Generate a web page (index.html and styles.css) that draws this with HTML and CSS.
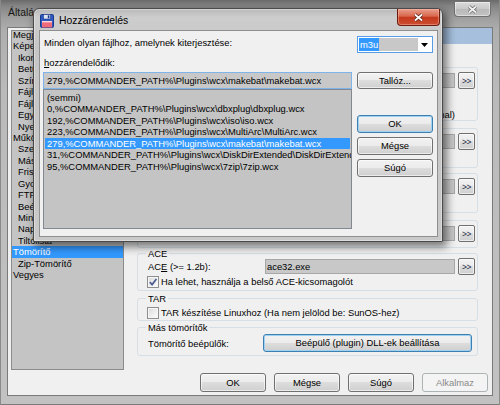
FILE: index.html
```html
<!DOCTYPE html>
<html lang="hu">
<head>
<meta charset="utf-8">
<title>Hozzárendelés</title>
<link rel="stylesheet" href="styles.css">
</head>
<body>
<div class="desk">
  <div class="win">
    <div class="win-title">
      <span class="win-caption">Általános beállítások</span>
      <span class="cap-close cap-close--inactive">
        <svg width="11" height="9" viewBox="0 0 11 9"><path d="M2 1.5l7 6M9 1.5l-7 6" stroke="#6a6a6a" stroke-width="3.4"/><path d="M2 1.5l7 6M9 1.5l-7 6" stroke="#f2f2f2" stroke-width="1.7"/></svg>
      </span>
    </div>
    <div class="win-client">
      <div class="tree">
        <ul class="tree-items">
          <li class="ti">Megjelenés</li>
          <li class="ti">Képernyő</li>
          <li class="ti ti--sub">Ikonok</li>
          <li class="ti ti--sub">Betűkészlet</li>
          <li class="ti ti--sub">Színek</li>
          <li class="ti ti--sub">Fájlmegjelenítés</li>
          <li class="ti ti--sub">Fájllista-fülek</li>
          <li class="ti ti--sub">Egyéni oszlopok</li>
          <li class="ti ti--sub">Nyelv</li>
          <li class="ti">Működés</li>
          <li class="ti ti--sub">Szerkesztés/Nézőke</li>
          <li class="ti ti--sub">Másolás/Törlés</li>
          <li class="ti ti--sub">Frissítés</li>
          <li class="ti ti--sub">Gyorskeresés</li>
          <li class="ti ti--sub">FTP</li>
          <li class="ti ti--sub">Beépülők</li>
          <li class="ti ti--sub">Miniatűrök</li>
          <li class="ti ti--sub">Naplófájl</li>
          <li class="ti ti--sub">Tiltólista</li>
          <li class="ti ti--sel">Tömörítő</li>
          <li class="ti ti--sub">Zip-Tömörítő</li>
          <li class="ti">Vegyes</li>
        </ul>
      </div>

      <div class="panel">
        <div class="panel-band"></div>

        <div class="grp grp--arj">
          <div class="grp-label grp-label--hidden"></div>
          <div class="prow"><span class="plabel"></span><span class="field"></span><span class="mini">&gt;&gt;</span></div>
          <div class="cline cline--first"><span class="chk"></span></div>
          <div class="cline cline--second"><span class="chk"></span><span>Kicsomagoláshoz a belső kicsomagoló használata (ARJ v2.xx, normal)</span></div>
        </div>

        <div class="grp grp--lha">
          <div class="grp-label grp-label--hidden"></div>
          <div class="prow"><span class="plabel"></span><span class="field"></span><span class="mini">&gt;&gt;</span></div>
        </div>

        <div class="grp grp--rar">
          <div class="grp-label grp-label--hidden"></div>
          <div class="prow"><span class="plabel"></span><span class="field"></span><span class="mini">&gt;&gt;</span></div>
        </div>

        <div class="grp grp--uc2">
          <div class="grp-label grp-label--hidden"></div>
          <div class="prow"><span class="plabel"></span><span class="field"></span><span class="mini">&gt;&gt;</span></div>
        </div>

        <div class="grp grp--ace">
          <div class="grp-label">ACE</div>
          <div class="prow"><span class="plabel">AC<u>E</u> (&gt;= 1.2b):</span><span class="field">ace32.exe</span><span class="mini">&gt;&gt;</span></div>
          <div class="cline cline--ace"><span class="chk chk--on"><svg width="10" height="10" viewBox="0 0 10 10"><path d="M1.8 5.2l2.3 2.4 4.3-5.6" fill="none" stroke="#4a5d91" stroke-width="1.7"/></svg></span><span>Ha lehet, használja a belső ACE-kicsomagolót</span></div>
        </div>

        <div class="grp grp--tar">
          <div class="grp-label">TAR</div>
          <div class="cline cline--tar"><span class="chk"></span><span>TAR készítése Linuxhoz (Ha nem jelölöd be: SunOS-hez)</span></div>
        </div>

        <div class="grp grp--other">
          <div class="grp-label">Más tömörítők</div>
          <div class="prow prow--btn"><span class="plabel">Tömörítő beépülők:</span><button type="button" class="btn btn--default">Beépülő (plugin) DLL-ek beállítása</button></div>
        </div>
      </div>

      <div class="win-buttons">
        <button type="button" class="btn">OK</button>
        <button type="button" class="btn">Mégse</button>
        <button type="button" class="btn">Súgó</button>
        <button type="button" class="btn btn--disabled">Alkalmaz</button>
      </div>
    </div>
  </div>

  <div class="dlg">
    <div class="dlg-title">
      <svg class="dlg-icon" width="14" height="14" viewBox="0 0 14 14">
        <rect x="0.5" y="0.5" width="13" height="13" rx="1.2" fill="#2f59c0" stroke="#1b3a8c"/>
        <rect x="3.5" y="0.5" width="7" height="4.5" fill="#dfe6f3" stroke="#1b3a8c" stroke-width="0.6"/>
        <rect x="7.8" y="1.3" width="1.6" height="3" fill="#1b3a8c"/>
        <rect x="2" y="7" width="10" height="6.5" fill="#ef6b7b"/>
        <rect x="2" y="7" width="10" height="1.4" fill="#fbd3d8"/>
      </svg>
      <span class="dlg-caption">Hozzárendelés</span>
      <span class="dlg-close">
        <svg width="11" height="9" viewBox="0 0 11 9"><path d="M2 1.5l7 6M9 1.5l-7 6" stroke="#5a2318" stroke-width="3.4"/><path d="M2 1.5l7 6M9 1.5l-7 6" stroke="#ffffff" stroke-width="1.7"/></svg>
      </span>
    </div>
    <div class="dlg-client">
      <div class="drow1">
        <span class="dlabel">Minden olyan fájlhoz, amelynek kiterjesztése:</span>
        <div class="combo">
          <div class="combo-edit"><span class="combo-sel">m3u</span></div>
          <div class="combo-arrow"><svg width="7" height="4" viewBox="0 0 7 4"><path d="M0 0h7L3.5 4z" fill="#000"/></svg></div>
        </div>
      </div>
      <div class="dlabel dlabel--second"><u>h</u>ozzárendelődik:</div>
      <div class="dgrid">
        <div class="dleft">
          <div class="dedit">279,%COMMANDER_PATH%\Plugins\wcx\makebat\makebat.wcx</div>
          <ul class="dlist">
            <li class="dli">(semmi)</li>
            <li class="dli">0,%COMMANDER_PATH%\Plugins\wcx\dbxplug\dbxplug.wcx</li>
            <li class="dli">192,%COMMANDER_PATH%\Plugins\wcx\iso\iso.wcx</li>
            <li class="dli">223,%COMMANDER_PATH%\Plugins\wcx\MultiArc\MultiArc.wcx</li>
            <li class="dli dli--sel">279,%COMMANDER_PATH%\Plugins\wcx\makebat\makebat.wcx</li>
            <li class="dli">31,%COMMANDER_PATH%\Plugins\wcx\DiskDirExtended\DiskDirExtended.wcx</li>
            <li class="dli">95,%COMMANDER_PATH%\Plugins\wcx\7zip\7zip.wcx</li>
          </ul>
        </div>
        <div class="dright">
          <button type="button" class="btn dbtn">Tallóz...</button>
          <button type="button" class="btn btn--default dbtn dbtn--ok">OK</button>
          <button type="button" class="btn dbtn dbtn--next">Mégse</button>
          <button type="button" class="btn dbtn dbtn--next">Súgó</button>
        </div>
      </div>
    </div>
  </div>
</div>
</body>
</html>
```
FILE: styles.css
```css
* { box-sizing: border-box; }
html, body { margin: 0; padding: 0; }
body {
  width: 500px;
  height: 405px;
  overflow: hidden;
  font-family: "Liberation Sans", Arial, sans-serif;
  font-size: 9.4px;
  color: #000;
  background: #a0a0a0;
}
u { text-decoration: underline; text-underline-offset: 1px; }

.desk { position: relative; width: 500px; height: 405px; }

/* ---------- main (background) window ---------- */
.win {
  width: 500px;
  height: 405px;
  display: flex;
  flex-direction: column;
  padding: 0 7px 9px 7px;
  background: linear-gradient(to bottom, #6a6a6a 0, #858585 6px, #9f9f9f 18px, #aeaeae 30px, #bababa 90px, #c2c2c2 100%);
  box-shadow: inset 1px 0 0 #8a8a8a, inset -1px 0 0 #8a8a8a, inset 0 -1px 0 #7a7a7a;
}
.win-title { flex: none; height: 27px; display: flex; align-items: flex-start; }
.win-caption {
  margin: 7px 0 0 1px;
  font-size: 10.4px;
  line-height: 12px;
  color: #151515;
  white-space: nowrap;
}
.cap-close {
  margin: 2px 2px 0 auto;
  width: 37px;
  height: 15px;
  display: flex;
  align-items: center;
  justify-content: center;
  border: 1px solid #707070;
  border-top: none;
  border-radius: 0 0 4px 4px;
  background: linear-gradient(to bottom, #dadada 0%, #c8c8c8 50%, #b9b9b9 51%, #c3c3c3 100%);
  box-shadow: inset 0 0 0 1px rgba(255, 255, 255, 0.45);
}

.win-client {
  flex: 1;
  min-height: 0;
  border: 1px solid #7a7a7a;
  background: #f0f0f0;
  display: grid;
  grid-template-columns: 116px 1fr;
  grid-template-rows: 342px 1fr;
}

/* tree */
.tree {
  margin: 2px 0 0 3px;
  width: 113px;
  height: 340px;
  border: 1px solid #8b8b8b;
  background: #c4c4c4;
  overflow: hidden;
}
.tree-items { list-style: none; margin: -2px 0 0 0; padding: 0; }
.ti { line-height: 11.43px; padding-left: 1px; white-space: nowrap; }
.ti--sub { padding-left: 6px; }
.ti--sel { background: #3399ff; color: #fff; }

/* right panel */
.panel { display: flex; flex-direction: column; min-width: 0; }
.panel-band { flex: none; height: 16px; margin-left: 4px; background: #a5bfdc; }

.grp {
  flex: none;
  margin: 0 14px 0 13px;
  border: 1px solid #d5dfe5;
  border-radius: 3px;
  padding: 0 5px 0 9px;
}
.grp--arj { margin-top: 23px; height: 54px; }
.grp--lha { margin-top: 7px; height: 40px; }
.grp--rar { margin-top: 5px; height: 40px; }
.grp--uc2 { margin-top: 7px; height: 28px; }
.grp--ace { margin-top: 5px; height: 38px; }
.grp--tar { margin-top: 7px; height: 23px; }
.grp--other { margin-top: 6px; height: 29px; }

.grp-label {
  margin: -6px 0 0 -1px;
  padding: 0 2px;
  width: max-content;
  height: 11px;
  line-height: 11px;
  background: #f0f0f0;
  white-space: nowrap;
}
.grp-label--hidden { width: 30px; }

.prow {
  display: grid;
  grid-template-columns: 115px 190px 17px;
  column-gap: 3px;
  height: 17px;
  margin-top: -1px;
  align-items: center;
}
.prow--btn { grid-template-columns: 116px 209px; column-gap: 0; height: 18px; margin-top: 1px; }
.prow--btn .btn { height: 18px; }
.plabel { padding-left: 1px; white-space: nowrap; }
.field {
  height: 15px;
  border: 1px solid #a7a7a7;
  background: #c8c8c8;
  line-height: 13px;
  padding-left: 1px;
  white-space: nowrap;
  overflow: hidden;
}
.mini {
  height: 17px;
  display: flex;
  align-items: center;
  justify-content: center;
  font-size: 8.4px;
  letter-spacing: -0.5px;
  color: #1e2a44;
  border: 1px solid #707070;
  border-radius: 2px;
  background: linear-gradient(to bottom, #f2f2f2 0%, #ebebeb 49%, #dddddd 50%, #cfcfcf 100%);
  box-shadow: inset 0 0 0 1px rgba(255, 255, 255, 0.6);
}

.cline { display: flex; align-items: center; gap: 2px; height: 12px; line-height: 12px; white-space: nowrap; }
.cline--first { margin-top: 5px; }
.cline--second { margin-top: 3px; }
.cline--ace { margin-top: 1px; }
.cline--tar { margin-top: 3px; }
.chk {
  flex: none;
  width: 12px;
  height: 12px;
  border: 1px solid #8e8f8f;
  background: linear-gradient(135deg, #d9d9d9 0%, #f0f0f0 60%, #fbfbfb 100%);
  box-shadow: inset 0 0 0 1px #f6f6f6;
  display: flex;
  align-items: center;
  justify-content: center;
}

/* buttons */
.btn {
  font: inherit;
  color: #000;
  margin: 0;
  padding: 0;
  border: 1px solid #707070;
  border-radius: 3px;
  background: linear-gradient(to bottom, #f2f2f2 0%, #ebebeb 49%, #dddddd 50%, #cfcfcf 100%);
  box-shadow: inset 0 0 0 1px rgba(255, 255, 255, 0.6);
  display: flex;
  align-items: center;
  justify-content: center;
  white-space: nowrap;
  line-height: 12px;
}
.btn--default {
  border-color: #3c7fb1;
  box-shadow: inset 0 0 0 1px #9fd2f2;
}
.btn--disabled {
  border-color: #adb2b5;
  background: #f4f4f4;
  box-shadow: none;
  color: #8a8a8a;
}

.win-buttons {
  grid-column: 1 / -1;
  display: flex;
  justify-content: flex-end;
  align-items: flex-start;
  gap: 8px;
  padding: 3px 4px 0 0;
}
.win-buttons .btn { width: 66px; height: 19px; }

/* ---------- dialog ---------- */
.dlg {
  position: absolute;
  left: 33px;
  top: 8px;
  width: 410px;
  height: 234px;
  border: 1px solid #4a4a4a;
  border-radius: 6px 6px 0 0;
  background: linear-gradient(to bottom, #b9b9b9 0, #cdcdcd 8px, #cacaca 22px, #c6c6c6 40px, #c9c9c9 100%);
  box-shadow: 3px 4px 9px 1px rgba(0, 0, 0, 0.5), inset 0 0 0 1px rgba(255, 255, 255, 0.35);
  display: flex;
  flex-direction: column;
  padding: 0 5px 5px 6px;
}
.dlg-title { flex: none; height: 22px; display: flex; align-items: flex-start; }
.dlg-icon { flex: none; margin-top: 5px; }
.dlg-caption { margin: 6px 0 0 5px; font-size: 10.4px; line-height: 12px; white-space: nowrap; }
.dlg-close {
  margin: 0 -3px 0 auto;
  width: 43px;
  height: 17px;
  display: flex;
  align-items: center;
  justify-content: center;
  border: 1px solid #6b1d10;
  border-top: none;
  border-radius: 0 0 4px 4px;
  background: linear-gradient(to bottom, #e7a08e 0%, #d9674d 45%, #c53a1e 52%, #cd4d30 100%);
  box-shadow: inset 0 0 0 1px rgba(255, 190, 170, 0.45);
}

.dlg-client {
  flex: 1;
  min-height: 0;
  background: #f0f0f0;
  box-shadow: 0 0 0 1px #8f8f8f;
  padding: 5px 4px 0 3px;
}
.drow1 { display: flex; justify-content: space-between; align-items: flex-start; height: 17px; }
.dlabel { padding-left: 1px; line-height: 14px; white-space: nowrap; }
.dlabel--second { margin-top: 3px; }

.combo {
  display: flex;
  width: 76px;
  height: 17px;
  border: 1px solid #569de5;
  background: #fff;
  padding: 1px;
}
.combo-edit { width: 59px; background: #c8c8c8; line-height: 13px; }
.combo-sel { display: inline-block; padding: 0 1px; background: #3399ff; color: #fff; }
.combo-arrow { flex: 1; display: flex; align-items: center; justify-content: center; }

.dgrid {
  margin-top: 2px;
  display: grid;
  grid-template-columns: 309px 76px;
  column-gap: 5px;
  align-items: start;
}
.dedit {
  height: 17px;
  border: 1px solid #7eb4ea;
  background: #c8c8c8;
  line-height: 15px;
  padding-left: 3px;
  white-space: nowrap;
  overflow: hidden;
}
.dlist {
  list-style: none;
  margin: 0;
  height: 140px;
  border: 1px solid #828790;
  background: #c4c4c4;
  padding: 2px 1px 0 1px;
  overflow: hidden;
}
.dli { line-height: 11.43px; padding-left: 2px; white-space: nowrap; }
.dli--sel { background: #3399ff; color: #fff; }

.dright { display: flex; flex-direction: column; }
.dbtn { height: 17px; }
.dbtn--ok { margin-top: 26px; height: 18px; }
.dbtn--next { margin-top: 4px; height: 18px; }
```
